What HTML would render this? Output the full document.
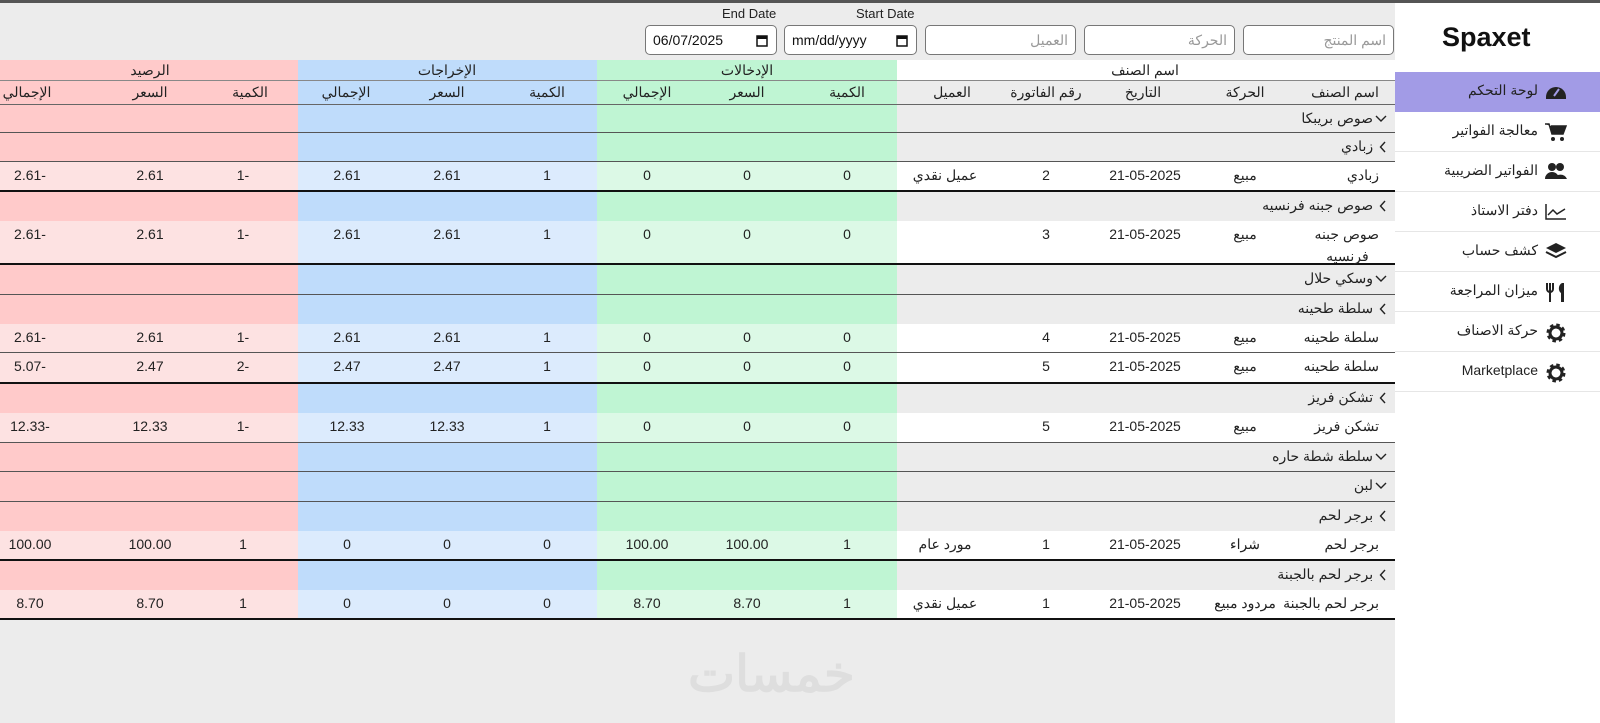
<!DOCTYPE html>
<html><head><meta charset="utf-8">
<style>
*{margin:0;padding:0;box-sizing:border-box}
body{width:1600px;height:723px;overflow:hidden;background:#ececec;font-family:"Liberation Sans","Noto Sans CJK SC",sans-serif;font-size:14px;color:#222;position:relative}
.topbar{position:absolute;left:0;top:0;width:1600px;height:3px;background:#555}
.side{position:absolute;left:1395px;top:3px;width:205px;height:720px;background:#fff}
.logo{position:absolute;left:1442px;top:22px;font-size:27px;font-weight:bold;color:#111}
.mi{position:absolute;left:1395px;width:205px;height:40px;border-bottom:1px solid #e6e6e6;font-size:14px;color:#222}
.mi span{position:absolute;right:62px;top:10px;white-space:nowrap}
.mi svg{position:absolute;left:150px;top:10px}
.inp{position:absolute;top:25px;height:30px;background:#fff;border:1px solid #777;border-radius:5px;font-size:14px;color:#999;padding:6px 7px;text-align:right}
.date{color:#111;text-align:left;font-size:14px}
.date svg{position:absolute;right:8px;top:8px}
.lbl{position:absolute;top:6px;font-size:13px;color:#222}
.row{position:absolute;left:0;width:1395px}
.c{position:absolute;transform:translateX(-50%);white-space:nowrap}
.g{position:absolute;right:8px;white-space:nowrap}
.g svg{vertical-align:middle;margin-left:2px}
.wm{position:absolute;left:688px;top:645px;font-size:50px;color:#dedede;font-weight:bold;font-family:"Liberation Sans","Noto Sans CJK SC",sans-serif}
</style></head><body>
<div class="topbar"></div>

<div class="lbl" style="left:722px">End Date</div>
<div class="lbl" style="left:856px">Start Date</div>
<div class="inp date" style="left:645px;width:132px">06/07/2025<svg width="12" height="13" viewBox="0 0 12 13"><rect x="1" y="2" width="10" height="10" fill="none" stroke="#111" stroke-width="1.5"/><rect x="1" y="2" width="10" height="3" fill="#111"/></svg></div>
<div class="inp date" style="left:784px;width:133px">mm/dd/yyyy<svg width="12" height="13" viewBox="0 0 12 13"><rect x="1" y="2" width="10" height="10" fill="none" stroke="#111" stroke-width="1.5"/><rect x="1" y="2" width="10" height="3" fill="#111"/></svg></div>
<div class="inp" style="left:925px;width:151px">العميل</div>
<div class="inp" style="left:1084px;width:151px">الحركة</div>
<div class="inp" style="left:1243px;width:151px">اسم المنتج</div>

<div class="row" style="top:60px;height:21px;background:linear-gradient(90deg,#ffcaca 0 298px,#bfdcfb 298px 597px,#bff5d3 597px 897px,#fff 897px);border-bottom:1px solid #888">
<span class="c" style="left:150px;top:2px">الرصيد</span><span class="c" style="left:447px;top:2px">الإخراجات</span><span class="c" style="left:747px;top:2px">الإدخالات</span><span class="c" style="left:1145px;top:2px">اسم الصنف</span>
</div>
<div class="row" style="top:81px;height:24px;background:linear-gradient(90deg,#ffcaca 0 298px,#bfdcfb 298px 597px,#bff5d3 597px 897px,#ececec 897px);border-bottom:1px solid #666">
<span class="c" style="left:27px;top:3px">الإجمالي</span><span class="c" style="left:150px;top:3px">السعر</span><span class="c" style="left:250px;top:3px">الكمية</span>
<span class="c" style="left:346px;top:3px">الإجمالي</span><span class="c" style="left:447px;top:3px">السعر</span><span class="c" style="left:547px;top:3px">الكمية</span>
<span class="c" style="left:647px;top:3px">الإجمالي</span><span class="c" style="left:747px;top:3px">السعر</span><span class="c" style="left:847px;top:3px">الكمية</span>
<span class="c" style="left:952px;top:3px">العميل</span><span class="c" style="left:1046px;top:3px">رقم الفاتورة</span><span class="c" style="left:1143px;top:3px">التاريخ</span><span class="c" style="left:1245px;top:3px">الحركة</span><span class="c" style="left:1345px;top:3px">اسم الصنف</span>
</div>

<div id="rows"></div>
<script>
var G='background:linear-gradient(90deg,#ffcaca 0 298px,#bfdcfb 298px 597px,#bff5d3 597px 897px,#ececec 897px);';
var D='background:linear-gradient(90deg,#fde2e2 0 298px,#dcebfd 298px 597px,#dcf9e6 597px 897px,#fff 897px);';
var down='<svg width="12" height="8" viewBox="0 0 12 8"><path d="M1 1l5 5 5-5" fill="none" stroke="#222" stroke-width="1.4"/></svg>';
var left='<svg width="8" height="12" viewBox="0 0 8 12"><path d="M6 1L1.5 6 6 11" fill="none" stroke="#222" stroke-width="1.4"/></svg>';
var xs=[30,150,243,347,447,547,647,747,847,945,1046,1145,1245];
var R=[
['g',105,28,'صوص بريبكا',1],
['s',133,29,'زبادي',1],
['d',162,30,['2.61-','2.61','1-','2.61','2.61','1','0','0','0','عميل نقدي','2','21-05-2025','مبيع','زبادي'],2],
['s',192,29,'صوص جبنه فرنسيه',0],
['d',221,44,['2.61-','2.61','1-','2.61','2.61','1','0','0','0','','3','21-05-2025','مبيع','صوص جبنه<br>&nbsp;&nbsp;&nbsp;فرنسيه'],2],
['g',265,30,'وسكي حلال',1],
['s',295,29,'سلطة طحينه',0],
['d',324,29,['2.61-','2.61','1-','2.61','2.61','1','0','0','0','','4','21-05-2025','مبيع','سلطة طحينه'],1],
['d',353,31,['5.07-','2.47','2-','2.47','2.47','1','0','0','0','','5','21-05-2025','مبيع','سلطة طحينه'],2],
['s',384,29,'تشكن فريز',0],
['d',413,30,['12.33-','12.33','1-','12.33','12.33','1','0','0','0','','5','21-05-2025','مبيع','تشكن فريز'],1],
['g',443,29,'سلطة شطة حاره',1],
['g',472,30,'لبن',1],
['s',502,29,'برجر لحم',0],
['d',531,30,['100.00','100.00','1','0','0','0','100.00','100.00','1','مورد عام','1','21-05-2025','شراء','برجر لحم'],2],
['s',561,29,'برجر لحم بالجبنة',0],
['d',590,30,['8.70','8.70','1','0','0','0','8.70','8.70','1','عميل نقدي','1','21-05-2025','مردود مبيع','برجر لحم بالجبنة'],2]
];
var h='';
R.forEach(function(r){
 var b=r[4]==2?'border-bottom:2px solid #111;':(r[4]==1?'border-bottom:1px solid #555;':'');
 var st='top:'+r[1]+'px;height:'+r[2]+'px;'+b;
 if(r[0]=='d'){
  h+='<div class="row" style="'+st+D+'">';
  for(var i=0;i<13;i++) if(r[3][i]) h+='<span class="c" style="left:'+xs[i]+'px;top:5px">'+r[3][i]+'</span>';
  h+='<span class="g" style="right:16px;line-height:22px;top:2px">'+r[3][13]+'</span></div>';
 } else {
  h+='<div class="row" style="'+st+G+'"><span class="g" style="top:5px">'+r[3]+(r[0]=='g'?down:' '+left)+'</span></div>';
 }
});
document.getElementById('rows').innerHTML=h;
</script>

<div class="side"></div>
<div class="logo">Spaxet</div>
<div class="mi" style="top:72px;background:#a29be6;border:none"><span>لوحة التحكم</span><svg width="22" height="18" viewBox="0 0 22 18"><path d="M1 15a10 10 0 0 1 20 0v2H1z" fill="#222"/><path d="M9 14l5-7" stroke="#a29be6" stroke-width="2"/></svg></div>
<div class="mi" style="top:112px"><span>معالجة الفواتير</span><svg width="22" height="20" viewBox="0 0 22 20"><path d="M0 2h4l3 10h11l3-8H6" fill="#222" stroke="#222" stroke-width="1.5"/><circle cx="8" cy="17" r="2" fill="#222"/><circle cx="17" cy="17" r="2" fill="#222"/></svg></div>
<div class="mi" style="top:152px"><span>الفواتير الضريبية</span><svg width="22" height="18" viewBox="0 0 22 18"><circle cx="7" cy="5" r="4" fill="#222"/><circle cx="15" cy="5" r="4" fill="#222"/><path d="M0 17a7 7 0 0 1 14 0zM9 17a7 7 0 0 1 13 0z" fill="#222"/></svg></div>
<div class="mi" style="top:192px"><span>دفتر الاستاذ</span><svg width="22" height="18" viewBox="0 0 22 18"><path d="M1 2v15h20M3 13l5-5 4 4 8-5" fill="none" stroke="#222" stroke-width="1.5"/></svg></div>
<div class="mi" style="top:232px"><span>كشف حساب</span><svg width="22" height="18" viewBox="0 0 22 18"><path d="M11 1l10 5-10 5L1 6z" fill="#222"/><path d="M1 10l10 5 10-5" fill="none" stroke="#222" stroke-width="2"/></svg></div>
<div class="mi" style="top:272px"><span>ميزان المراجعة</span><svg width="22" height="20" viewBox="0 0 22 20"><path d="M2 1v6a3 3 0 0 0 6 0V1M5 1v19" fill="none" stroke="#222" stroke-width="2"/><path d="M17 1c-4 2-4 8-1 10v9h3V1z" fill="#222"/></svg></div>
<div class="mi" style="top:312px"><span>حركة الاصناف</span><svg width="22" height="22" viewBox="0 0 22 22"><circle cx="11" cy="11" r="7" fill="none" stroke="#222" stroke-width="5" stroke-dasharray="3 2.5"/><circle cx="11" cy="11" r="6" fill="none" stroke="#222" stroke-width="3"/></svg></div>
<div class="mi" style="top:352px"><span>Marketplace</span><svg width="22" height="22" viewBox="0 0 22 22"><circle cx="11" cy="11" r="7" fill="none" stroke="#222" stroke-width="5" stroke-dasharray="3 2.5"/><circle cx="11" cy="11" r="6" fill="none" stroke="#222" stroke-width="3"/></svg></div>

<div class="wm">خمسات</div>
</body></html>
